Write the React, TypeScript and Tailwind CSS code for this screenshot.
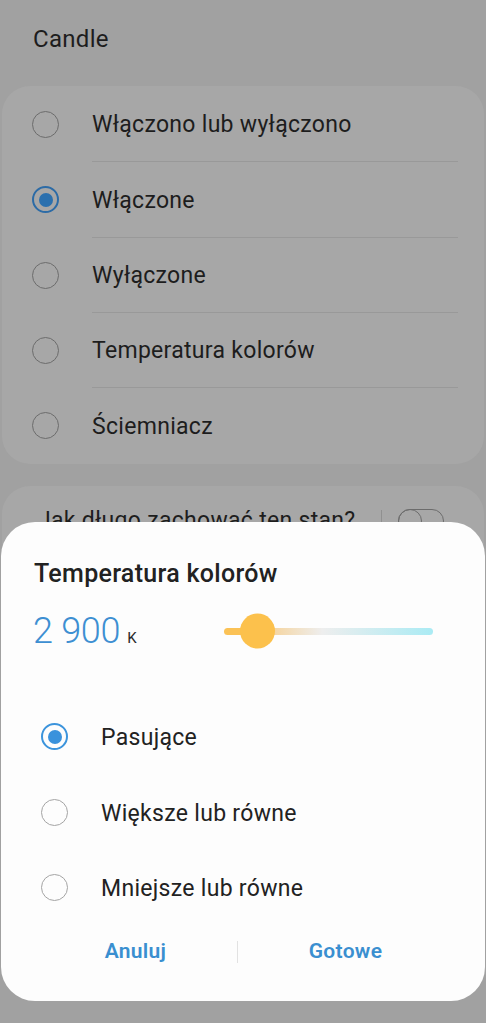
import React from "react";

const MODES = ["Włączono lub wyłączono", "Włączone", "Wyłączone", "Temperatura kolorów", "Ściemniacz"];
const COMPARE = ["Pasujące", "Większe lub równe", "Mniejsze lub równe"];

function Radio({ on, dim }: { on: boolean; dim?: boolean }) {
    if (on) {
        return (
            <div className={`flex h-[27px] w-[27px] shrink-0 items-center justify-center rounded-full border-2 ${dim ? "border-[#2c6ba6]" : "border-[#3c94dc]"}`}>
                <div className={`h-[14px] w-[14px] rounded-full ${dim ? "bg-[#2b70ae]" : "bg-[#3a92dc]"}`} />
            </div>
        );
    }
    return <div className={`h-[27px] w-[27px] shrink-0 rounded-full border-[1.5px] ${dim ? "border-[#6c6c6c]" : "border-[#a4a4a4]"}`} />;
}

export default function App() {
    return (
        <div className="relative h-[1023px] w-full overflow-hidden bg-[#a1a1a1] font-['Roboto',sans-serif] text-[#1d1d1d]">
            <div className="px-[33px] pt-[24px] text-[24px] leading-[30px] tracking-[0.3px]">Candle</div>

            <div className="mx-[2px] mt-[32px] rounded-[28px] bg-[#a7a7a7] py-[1px]">
                {MODES.map((m, i) => (
                    <div key={m} className="flex h-[75.25px] items-center pl-[30px]">
                        <Radio on={i === 1} dim />
                        <div className={`ml-[33px] mr-[26px] flex h-full flex-1 items-center pt-[3px] text-[23px] tracking-[0.3px] ${i < MODES.length - 1 ? "border-b border-[#999999]" : ""}`}>
                            {m}
                        </div>
                    </div>
                ))}
            </div>

            <div className="mx-[2px] mt-[22px] h-[300px] rounded-[28px] bg-[#a7a7a7] pt-[20px]">
                <div className="flex items-center pl-[36px] pr-[40px]">
                    <div className="flex-1 text-[23px] leading-[30px] tracking-[0.3px]">Jak długo zachować ten stan?</div>
                    <div className="mr-[16px] h-[22px] w-px bg-[#909090]" />
                    <div className="relative h-[24px] w-[46px] rounded-full border-[1.5px] border-[#6c6c6c]">
                        <div className="absolute left-[-1px] top-[-1.5px] h-[24px] w-[24px] rounded-full border-[1.5px] border-[#6c6c6c]" />
                    </div>
                </div>
            </div>

            {/* dialog */}
            <div className="absolute left-[1px] right-[1px] top-[522px] h-[479px] rounded-[34px] bg-[#fdfdfd]">
                <div className="px-[33px] pt-[37px] text-[25px] font-medium leading-[30px] tracking-[0.3px] text-[#222222]">Temperatura kolorów</div>

                <div className="mt-[20px] flex h-[44px] items-center pl-[32px]">
                    <div className="flex w-[190px] items-baseline">
                        <span className="text-[36px] font-light tracking-[-0.3px] text-[#3d8fd2]">2 900</span>
                        <span className="ml-[7px] text-[15px] text-[#2a2a2a]">K</span>
                    </div>
                    <div className="relative ml-[1px] h-[7px] w-[209px] rounded-full bg-[linear-gradient(to_right,#fbc256_0%,#fbc256_17%,#f5d7a6_25%,#eeeeee_47%,#aaebf4_100%)]">
                        <div className="absolute left-[16px] top-1/2 h-[35px] w-[35px] -translate-y-1/2 rounded-full bg-[#fcc14c]" />
                    </div>
                </div>

                <div className="mt-[46px]">
                    {COMPARE.map((c, i) => (
                        <div key={c} className="flex h-[75.5px] items-center pl-[40px]">
                            <Radio on={i === 0} />
                            <div className="ml-[33px] pt-[3px] text-[23px] tracking-[0.3px] text-[#222222]">{c}</div>
                        </div>
                    ))}
                </div>

                <div className="flex h-[52px] items-center pl-[33px]">
                    <div className="w-[203px] text-center text-[21px] font-semibold tracking-[0.3px] text-[#3a8fd0]">Anuluj</div>
                    <div className="h-[22px] w-px bg-[#e2e2e2]" />
                    <div className="mr-[32px] flex-1 text-center text-[21px] font-semibold tracking-[0.3px] text-[#3a8fd0]">Gotowe</div>
                </div>
            </div>
        </div>
    );
}
